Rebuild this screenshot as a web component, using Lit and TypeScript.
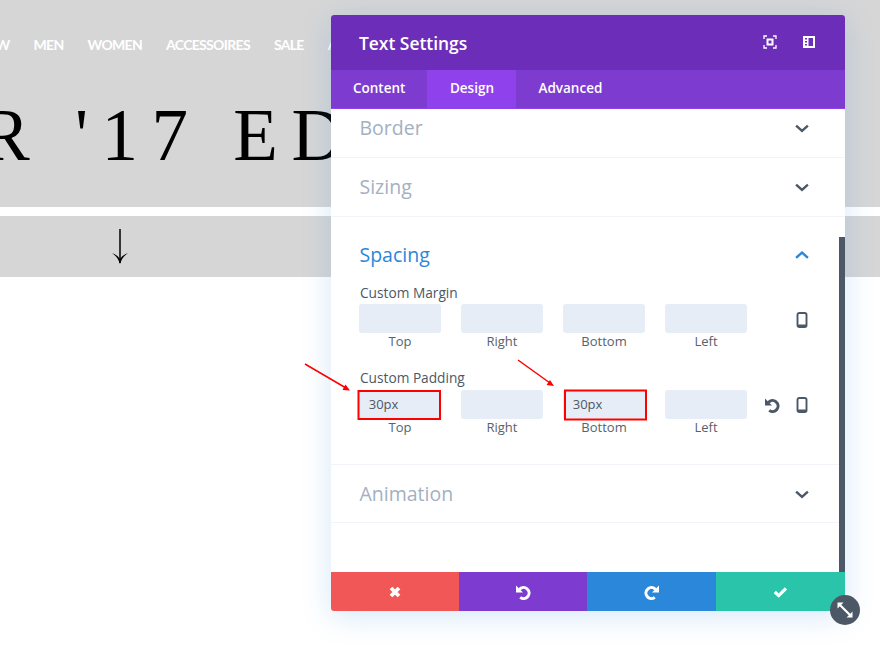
import { LitElement, html, css, svg } from "lit";
import { customElement } from "lit/decorators.js";

const chevDown = html`<svg class="chev" width="14" height="10" viewBox="0 0 14 10"><path d="M2 2.500 7 7l5-4.500" fill="none" stroke="#4c5866" stroke-width="2.400" stroke-linecap="square"/></svg>`;
const chevUp = html`<svg class="chevu" width="14" height="10" viewBox="0 0 14 10"><path d="M2 7 7 2.500 12 7" fill="none" stroke="#2b87da" stroke-width="2.400" stroke-linecap="square"/></svg>`;
const phone = html`<svg class="ph" width="12" height="16" viewBox="0 0 12 16"><rect x="1.500" y="1" width="9" height="14" rx="1.800" fill="none" stroke="#4c5866" stroke-width="1.900"/><rect x="1.500" y="12.500" width="9" height="2.500" rx="1" fill="#4c5866"/></svg>`;
const undoPath = svg`<path d="M4.400 5.400A5.500 5.500 0 1 1 5.200 13.400" fill="none" stroke-width="3"/><path d="M1 1.500v7h7z" stroke="none"/>`;
const undo = (c: string, s = 16) => html`<svg class="ph" width=${s} height=${s} viewBox="0 0 16 16" fill=${c} stroke=${c}>${undoPath}</svg>`;

@customElement("app-root")
export class AppRoot extends LitElement {
  static styles = css`
    :host { display: block; font-family: "Open Sans", sans-serif; }
    * { box-sizing: border-box; }
    .page { position: relative; width: 880px; height: 648px; overflow: hidden; background: #fff; }
    .band { background: #d6d6d6; overflow: hidden; }
    .hero { height: 207px; display: flex; flex-direction: column; margin-bottom: 9px; }
    .nav { display: flex; gap: 24px; margin: 36px 0 0 -22px; font: 700 14px/17px Lato, sans-serif; letter-spacing: -0.68px; color: #fff; white-space: nowrap; }
    .headline { margin: 37px 0 0 -19px; font: 400 73px/91px "Liberation Serif", serif; letter-spacing: 13.500px; color: #000; white-space: nowrap; }
    .arrow-band { height: 61px; display: flex; align-items: center; padding: 0 0 0 106px; }
    .modal { position: absolute; left: 331px; top: 15px; width: 514px; height: 596px; display: flex; flex-direction: column; border-radius: 3px; background: #fff; box-shadow: 0 5px 30px rgba(43,135,218,.2); }
    .head { height: 55px; flex: none; background: #6c2eb9; border-radius: 3px 3px 0 0; color: #fff; display: flex; align-items: center; padding: 0 29px 0 28px; font-size: 17.400px; font-weight: 600; }
    .head .t { flex: 1; }
    .head .ic { display: flex; gap: 25px; margin-top: -2px; }
    .tabs { height: 39px; flex: none; display: flex; background: #7e3bd0; color: #fff; font-size: 13.500px; font-weight: 600; border-bottom: 1px solid #8f42ec; }
    .tab { padding: 0 22px 2px 22px; display: flex; align-items: center; }
    .tab.on { background: #8f42ec; padding: 0 22.500px 2px; }
    .body { flex: 1; position: relative; overflow: hidden; min-height: 0; }
    .sec { border-bottom: 1px solid #f1f5f9; padding: 0 36px 0 28.500px; color: #a3b0c2; font-size: 19.500px; }
    .row { display: flex; align-items: center; justify-content: space-between; line-height: 27px; }
    .chev { margin-top: 3px; }
    .s1 { height: 49px; padding-top: 5px; }
    .s2 { height: 59px; padding-top: 15px; }
    .s3 { height: 248px; padding-top: 24px; }
    .s4 { height: 58px; padding-top: 15px; }
    .s3 .row { color: #2b87da; }
    .lbl { color: #4c5866; font-size: 13.700px; font-weight: 500; line-height: 18px; padding-left: 0.500px; }
    .m { margin-top: 16px; }
    .p { margin-top: 19px; }
    .fields { display: flex; margin-top: 2px; margin-left: -0.500px; }
    .fields.lower { margin-top: 3px; }
    .f { width: 82px; margin-right: 20px; display: flex; flex-direction: column; align-items: center; }
    .inp { width: 82.500px; height: 29px; background: #e7edf6; border-radius: 3px; font-size: 13px; line-height: 29px; color: #4c5866; padding-left: 10px; }
    .cap { font-size: 13px; line-height: 17px; color: #56626f; }
    .acts { flex: 1; margin: 0 1px 0 -5px; height: 31px; display: flex; align-items: center; justify-content: flex-end; gap: 16px; }
    .lower .acts { height: 30px; }
    .scroll { position: absolute; right: 0; top: 128px; bottom: 0; width: 6px; background: #4c5866; }
    .foot { height: 39px; flex: none; display: grid; grid-template-columns: 128px 128px 129px 129px; }
    .foot div { display: flex; align-items: center; justify-content: center; }
    .red { background: #f25757; border-radius: 0 0 0 3px; }
    .pur { background: #7e3bd0; }
    .blu { background: #2b87da; }
    .tea { background: #29c4a9; border-radius: 0 0 3px 0; }
    .grip { position: absolute; left: 830px; top: 595px; width: 30px; height: 30px; border-radius: 50%; background: #4c5866; display: flex; align-items: center; justify-content: center; }
    .notes { position: absolute; inset: 0; pointer-events: none; }
  `;

  fields(val: Record<string, string>) {
    return ["Top", "Right", "Bottom", "Left"].map(
      (n) => html`<div class="f"><div class="inp">${val[n] ?? ""}</div><div class="cap">${n}</div></div>`
    );
  }

  render() {
    return html`<div class="page">
      <div class="band hero">
        <div class="nav"><span>NEW</span><span>MEN</span><span>WOMEN</span><span>ACCESSOIRES</span><span>SALE</span><span>ABOUT</span></div>
        <div class="headline">R '17 EDITION</div>
      </div>
      <div class="band arrow-band">
        <svg width="28" height="38" viewBox="0 0 28 38"><path d="M14 1v34" stroke="#000" stroke-width="1.500"/><path d="M6 25c4 3 6.500 6 8 11 1.500-5 4-8 8-11-3 1-6 3-8 6-2-3-5-5-8-6z" fill="#000"/></svg>
      </div>

      <div class="modal">
        <div class="head">
          <span class="t">Text Settings</span>
          <span class="ic">
            <svg width="14" height="14" viewBox="0 0 14 14" fill="none" stroke="#fff" stroke-width="1.300"><path d="M1 4V1h3M10 1h3v3M13 10v3h-3M4 13H1v-3"/><rect x="4.500" y="4.500" width="5" height="5" stroke-width="2"/></svg>
            <svg width="14" height="14" viewBox="0 0 14 14"><path fill="#fff" fill-rule="evenodd" d="M1 1h12v12H1zM6.500 3v8H11V3zM3 3v1.500h2V3zM3 6v1.500h2V6zM3 9v1.500h2V9z"/></svg>
          </span>
        </div>
        <div class="tabs"><div class="tab">Content</div><div class="tab on">Design</div><div class="tab">Advanced</div></div>
        <div class="body">
          <div class="sec s1"><div class="row">Border ${chevDown}</div></div>
          <div class="sec s2"><div class="row">Sizing ${chevDown}</div></div>
          <div class="sec s3">
            <div class="row">Spacing ${chevUp}</div>
            <div class="lbl m">Custom Margin</div>
            <div class="fields">${this.fields({})}<div class="acts">${phone}</div></div>
            <div class="lbl p">Custom Padding</div>
            <div class="fields lower">${this.fields({ Top: "30px", Bottom: "30px" })}<div class="acts">${undo("#4c5866")}${phone}</div></div>
          </div>
          <div class="sec s4"><div class="row">Animation ${chevDown}</div></div>
          <div class="scroll"></div>
        </div>
        <div class="foot">
          <div class="red"><svg width="14" height="14" viewBox="0 0 14 14"><path d="M3 3l8 8M11 3l-8 8" stroke="#fff" stroke-width="3.800"/></svg></div>
          <div class="pur">${undo("#fff")}</div>
          <div class="blu"><svg width="16" height="16" viewBox="0 0 16 16" fill="#fff" stroke="#fff" style="transform:scaleX(-1)">${undoPath}</svg></div>
          <div class="tea"><svg width="15" height="12" viewBox="0 0 15 12"><path d="M1.800 6l3.900 3.600L13 2.300" fill="none" stroke="#fff" stroke-width="3.200"/></svg></div>
        </div>
      </div>
      <div class="grip"><svg width="18" height="18" viewBox="0 0 18 18" fill="#fff"><path d="M4 4l10 10" stroke="#fff" stroke-width="2.200"/><path d="M1.500 1.500h6l-6 6zM16.500 16.500h-6l6-6z"/></svg></div>

      <svg class="notes" width="880" height="648" viewBox="0 0 880 648" fill="none" stroke="#f00">
        <rect x="358.500" y="391" width="81.500" height="28" stroke-width="2"/>
        <rect x="565" y="390.500" width="81" height="29" stroke-width="2"/>
        <path d="M305 364l41 24M518 360l32 23" stroke-width="1.500"/>
        <path d="M350 390.500l-7.500-.5 3-5.500zM554 386l-7.500-1 3.500-5z" fill="#f00" stroke="none"/>
      </svg>
    </div>`;
  }
}
